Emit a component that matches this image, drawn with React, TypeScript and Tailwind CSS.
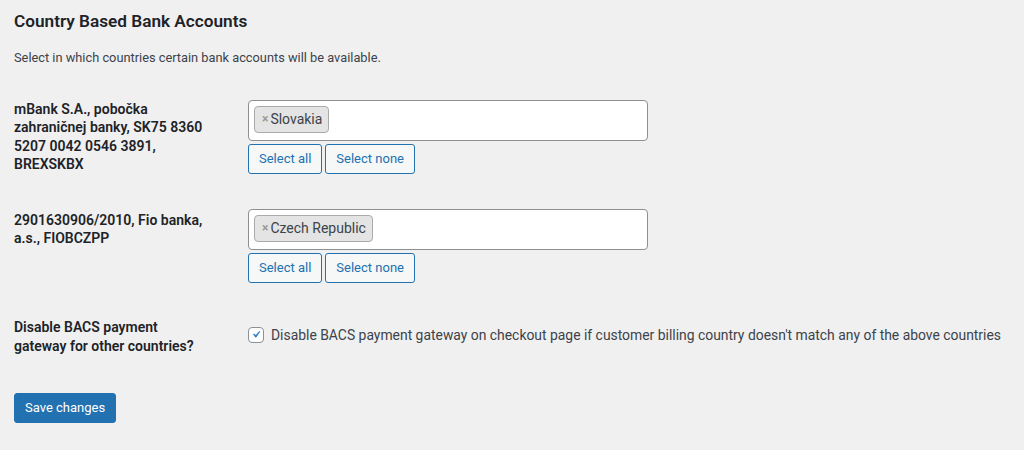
const rows = [
  {
    id: 'mbank',
    label: 'mBank S.A., pobočka zahraničnej banky, SK75 8360 5207 0042 0546 3891, BREXSKBX',
    countries: ['Slovakia'],
    spacing: 'mt-[32px]',
    labelPad: 'pt-0',
  },
  {
    id: 'fio',
    label: '2901630906/2010, Fio banka, a.s., FIOBCZPP',
    countries: ['Czech Republic'],
    spacing: 'mt-[35px]',
    labelPad: 'pt-[2px]',
  },
];

const CountryRow = ({
  label,
  countries,
  spacing,
  labelPad,
}: {
  label: string;
  countries: string[];
  spacing: string;
  labelPad: string;
}) => (
  <div className={`flex items-start ${spacing}`}>
    <div className={`w-[195px] mr-[39px] text-[14px] leading-[18.5px] font-semibold text-[#1d2327] ${labelPad}`}>
      {label}
    </div>
    <div className="flex flex-col">
      <div className="w-[400px] h-[41px] bg-white border border-[#8c8f94] rounded-[4px] px-[5px] pt-[5px]">
        <div className="flex gap-[5px]">
          {countries.map((c) => (
            <span
              key={c}
              className="flex items-center h-[27px] bg-[#e4e4e4] border border-[#aaaaaa] rounded-[4px] pl-[7px] pr-[6px] text-[14px] text-[#3c434a]"
            >
              <span className="text-[#999999] font-bold text-[12px] mr-[2px]">×</span>
              {c}
            </span>
          ))}
        </div>
      </div>
      <div className="flex gap-[3px] mt-[3px]">
        <button className="h-[30px] px-[10px] text-[13px] text-[#2271b1] bg-[#f6f7f7] border border-[#2271b1] rounded-[3px]">
          Select all
        </button>
        <button className="h-[30px] px-[10px] text-[13px] text-[#2271b1] bg-[#f6f7f7] border border-[#2271b1] rounded-[3px]">
          Select none
        </button>
      </div>
    </div>
  </div>
);

const App = () => {
  return (
    <div className="min-h-[450px] bg-[#f0f0f1] pl-[14px] pt-[10px] font-['Roboto',sans-serif] text-[#3c434a]">
      <h2 className="text-[17.2px] leading-[22px] font-semibold text-[#1d2327]">
        Country Based Bank Accounts
      </h2>
      <p className="mt-[16px] text-[12.8px] leading-[19.5px]">
        Select in which countries certain bank accounts will be available.
      </p>

      {rows.map((r) => (
        <CountryRow
          key={r.id}
          label={r.label}
          countries={r.countries}
          spacing={r.spacing}
          labelPad={r.labelPad}
        />
      ))}

      <div className="flex items-start mt-[35px]">
        <div className="w-[195px] mr-[39px] text-[14px] leading-[19px] font-semibold text-[#1d2327]">
          Disable BACS payment gateway for other countries?
        </div>
        <label className="flex items-center mt-[9px] text-[13.9px] leading-[16px]">
          <span className="w-4 h-4 bg-white border border-[#8c8f94] rounded-[4px] flex items-center justify-center mr-[7px]">
            <svg viewBox="0 0 20 20" className="w-[17px] h-[17px]">
              <path d="M14.83 4.89l1.34.94-5.81 8.38H9.02L5.78 9.67l1.34-1.25 2.57 2.4z" fill="#3582c4" />
            </svg>
          </span>
          Disable BACS payment gateway on checkout page if customer billing country doesn't match any of the above countries
        </label>
      </div>

      <button className="mt-[37px] h-[30px] px-[10px] text-[13px] text-white bg-[#2271b1] border border-[#2271b1] rounded-[3px]">
        Save changes
      </button>
    </div>
  );
};

export default App;
